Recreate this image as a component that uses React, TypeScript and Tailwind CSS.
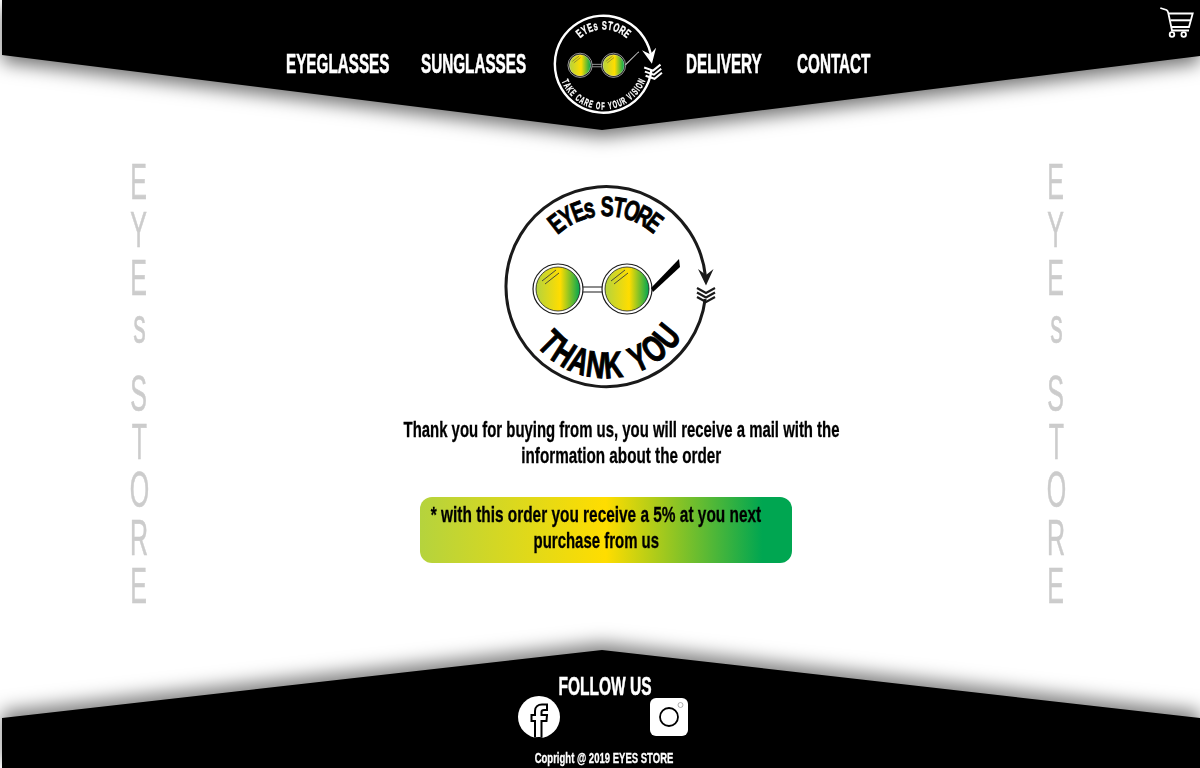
const sans = { fontFamily: '"Liberation Sans", Arial, sans-serif' };

const advance: Record<string, number> = { I: 0.55, ' ': 0.55, s: 0.85, M: 1.2, W: 1.3, O: 1.1 };

// one rotated letter per glyph, the letters are squeezed to the narrow look of the logo
function ArcText({ text, r, from, to, size, sx, color, bottom }: { text: string; r: number; from: number; to: number; size: number; sx: number; color: string; bottom?: boolean }) {
  const chars = text.split('');
  const w = chars.map(c => advance[c] ?? 1);
  const total = w.reduce((a, b) => a + b, 0) - (w[0] + w[w.length - 1]) / 2;
  let pos = -w[0] / 2;
  return (
    <g fill={color} fontWeight="700" fontSize={size} style={sans} stroke={color} strokeWidth={size * 0.03}>
      {chars.map((c, i) => {
        pos += w[i] / 2;
        const angle = from + ((to - from) * pos) / total;
        pos += w[i] / 2;
        if (c === ' ') return null;
        const y = bottom ? 110 + r : 110 - r;
        return (
          <text key={i} textAnchor="middle" transform={`rotate(${angle} 110 110) translate(110 ${y}) scale(${sx} 1)`}>
            {c}
          </text>
        );
      })}
    </g>
  );
}

function Logo({ size, color, id, children, ring, arrow, tilt }: { size: number; color: string; id: string; children: React.ReactNode; ring: number; arrow: number; tilt: number }) {
  return (
    <svg width={size * 240} height={size * 220} viewBox="0 0 240 220" className="block">
      <defs>
        <linearGradient id={id} x1="0" x2="1" y1="0" y2="0">
          <stop offset="0" stopColor="#b5d33d" />
          <stop offset="0.55" stopColor="#ffdd00" />
          <stop offset="1" stopColor="#00a651" />
        </linearGradient>
      </defs>
      <path d="M 209.2 122 A 100 100 0 1 1 209.4 99" fill="none" stroke={color} strokeWidth={ring} />
      <g transform={`translate(210 108) rotate(${tilt}) scale(${arrow})`}>
        <path d="M 0 0.5 L -8 -16 L 0 -10 L 7.5 -16 Z" fill={color} />
        <g fill="none" stroke={color} strokeWidth="2.2">
          <path d="M -9 3 L 0 8 L 9 3" />
          <path d="M -9 7.5 L 0 12.5 L 9 7.5" />
          <path d="M -9 12 L 0 17 L 9 12" />
        </g>
      </g>
      <g fill="none" stroke={color} strokeWidth="1.2">
        <circle cx="62" cy="112" r="25" />
        <circle cx="131" cy="112" r="25" />
        <path d="M 87 110 L 106 110 M 87 115 L 106 115" />
      </g>
      <circle cx="62" cy="112" r="22" fill={`url(#${id})`} stroke={color} strokeWidth="0.8" />
      <circle cx="131" cy="112" r="22" fill={`url(#${id})`} stroke={color} strokeWidth="0.8" />
      <path d="M 46 104 L 60 93 M 49 107 L 63 96 M 115 104 L 129 93 M 118 107 L 132 96" stroke="#3a3a3a" strokeWidth="0.9" />
      {children}
    </svg>
  );
}

function SideWord() {
  return (
    <div className="flex flex-col items-center w-[40px] text-[#cccccc] text-[50px] leading-[48px] [-webkit-text-stroke:0.6px_#cccccc]" style={sans}>
      {['E', 'Y', 'E', 's', ' ', 'S', 'T', 'O', 'R', 'E'].map((c, i) =>
        c === ' ' ? <div key={i} className="h-[20px]" /> : <div key={i} className="h-[48px] scale-x-[0.5]">{c}</div>
      )}
    </div>
  );
}

function Cart() {
  return (
    <svg width="36" height="34" viewBox="0 0 36 34" fill="none" stroke="white" strokeWidth="1.8" className="block">
      <path d="M 2.3 2 L 8.5 4 Q 9.7 4.7 10.3 7 L 14 24.5 L 31 24.5" />
      <path d="M 11 7.5 L 34.7 7.5 L 31 21 L 14 21" />
      <path d="M 12.5 14.3 L 32.5 14.3" strokeWidth="2" />
      <circle cx="14" cy="28.5" r="2.3" />
      <circle cx="25.7" cy="28.5" r="2.3" />
    </svg>
  );
}

function NavLink({ label, width }: { label: string; width: string }) {
  return (
    <a className={`block mt-[35px] whitespace-nowrap origin-left scale-x-[0.565] [-webkit-text-stroke:0.6px_white] ${width}`}>
      {label}
    </a>
  );
}

export default function App() {
  return (
    <div className="h-screen overflow-hidden flex flex-col bg-white relative" style={sans}>
      {/* header */}
      <div className="drop-shadow-[0_7px_9px_rgba(0,0,0,0.55)] z-10">
        <header className="h-[130px] bg-black [clip-path:polygon(2px_0,100%_0,100%_56px,602px_130px,2px_55px)] flex items-start pl-[286px] pt-[9px] text-white font-bold text-[27px]">
          <NavLink label="EYEGLASSES" width="w-[135px]" />
          <NavLink label="SUNGLASSES" width="w-[128px]" />
          <div className="w-[137px] pl-[1px] pt-[2px]">
            <Logo size={0.485} color="#ffffff" id="lensTop" ring={5} arrow={1.9} tilt={-10}>
              <path d="M 155 110 L 183 83 L 183 85 L 156.5 112 Z" fill="#cccccc" />
              <ArcText text="EYEs STORE" r={72} from={-38} to={38} size={25} sx={0.62} color="#ffffff" />
              <ArcText text="TAKE CARE OF YOUR VISION" r={93} from={66} to={-66} size={21} sx={0.55} color="#ffffff" bottom />
            </Logo>
          </div>
          <NavLink label="DELIVERY" width="w-[111px]" />
          <NavLink label="CONTACT" width="w-[90px]" />
        </header>
      </div>
      <div className="absolute right-[6px] top-[6px] z-20">
        <Cart />
      </div>

      {/* main */}
      <main className="flex-1 flex justify-between pl-[119px] pr-[124px]">
        <div className="pt-[28px]"><SideWord /></div>
        <div className="flex-1 flex flex-col items-center">
          <div className="mt-[47px] ml-[36px]">
            <Logo size={1} color="#1a1a1a" id="lensMain" ring={3} arrow={1} tilt={0}>
              <path d="M 155 111 L 183 82 L 184 90 L 157 115 Z" fill="#000000" />
              <ArcText text="EYEs STORE" r={71} from={-38} to={37} size={28} sx={0.7} color="#000000" />
              <ArcText text="THANK YOU" r={91} from={45} to={-51} size={37} sx={0.7} color="#000000" bottom />
            </Logo>
          </div>
          <div className="mt-[20px] ml-[48px] w-[450px] text-black font-bold text-[22px] leading-[26px] [-webkit-text-stroke:0.3px_black]">
            <div className="flex justify-center">
              <span className="shrink-0 whitespace-nowrap scale-x-[0.678]">Thank you for buying from us, you will receive a mail with the</span>
            </div>
            <div className="flex justify-center">
              <span className="shrink-0 whitespace-nowrap scale-x-[0.693]">information about the order</span>
            </div>
          </div>
          <div className="mt-[28px] ml-[16px] w-[372px] h-[66px] rounded-xl bg-[linear-gradient(90deg,#b5d33d_0%,#ffdd00_50%,#00a651_92%)] py-[5px] pr-[19px] text-black font-bold text-[22px] leading-[26px] [-webkit-text-stroke:0.3px_black]">
            <div className="flex justify-center">
              <span className="shrink-0 whitespace-nowrap scale-x-[0.7]">* with this order you receive a 5% at you next</span>
            </div>
            <div className="flex justify-center">
              <span className="shrink-0 whitespace-nowrap scale-x-[0.68]">purchase from us</span>
            </div>
          </div>
        </div>
        <div className="pt-[28px]"><SideWord /></div>
      </main>

      {/* footer */}
      <div className="drop-shadow-[0_-7px_9px_rgba(0,0,0,0.5)] z-10">
        <footer className="h-[118px] bg-black [clip-path:polygon(2px_68px,602px_0,100%_68px,100%_100%,2px_100%)] flex flex-col items-center text-white">
          <div className="mt-[22px] ml-[10px] font-bold text-[25px] leading-[28px] whitespace-nowrap scale-x-[0.62] [-webkit-text-stroke:0.5px_white]">FOLLOW US</div>
          <div className="ml-[6px] flex items-center gap-[90px] -mt-[4px]">
            <svg width="42" height="42" viewBox="0 0 42 42" className="block">
              <defs>
                <clipPath id="fbc"><circle cx="21" cy="21" r="21" /></clipPath>
              </defs>
              <circle cx="21" cy="21" r="21" fill="white" />
              <path clipPath="url(#fbc)" d="M 17 42 L 17 25 L 13.5 25 L 13.5 19 L 17 19 L 17 15 C 17 11 20 8.5 24 8.5 L 29 8.5 L 29 14 L 26 14 C 24 14 23.5 15 23.5 16 L 23.5 19 L 29 19 L 28.5 25 L 23.5 25 L 23.5 42 Z" fill="white" stroke="black" strokeWidth="2" />
            </svg>
            <svg width="38" height="38" viewBox="0 0 38 38" className="block">
              <rect width="38" height="38" rx="6" fill="white" />
              <circle cx="19" cy="19" r="9" fill="none" stroke="black" strokeWidth="1.8" />
              <circle cx="30.5" cy="7" r="2.5" fill="none" stroke="#999" strokeWidth="0.8" />
            </svg>
          </div>
          <div className="mt-[12px] ml-[8px] font-bold text-[14px] leading-[16px] whitespace-nowrap scale-x-[0.68] [-webkit-text-stroke:0.3px_white]">Copright @ 2019 EYES STORE</div>
        </footer>
      </div>
    </div>
  );
}
